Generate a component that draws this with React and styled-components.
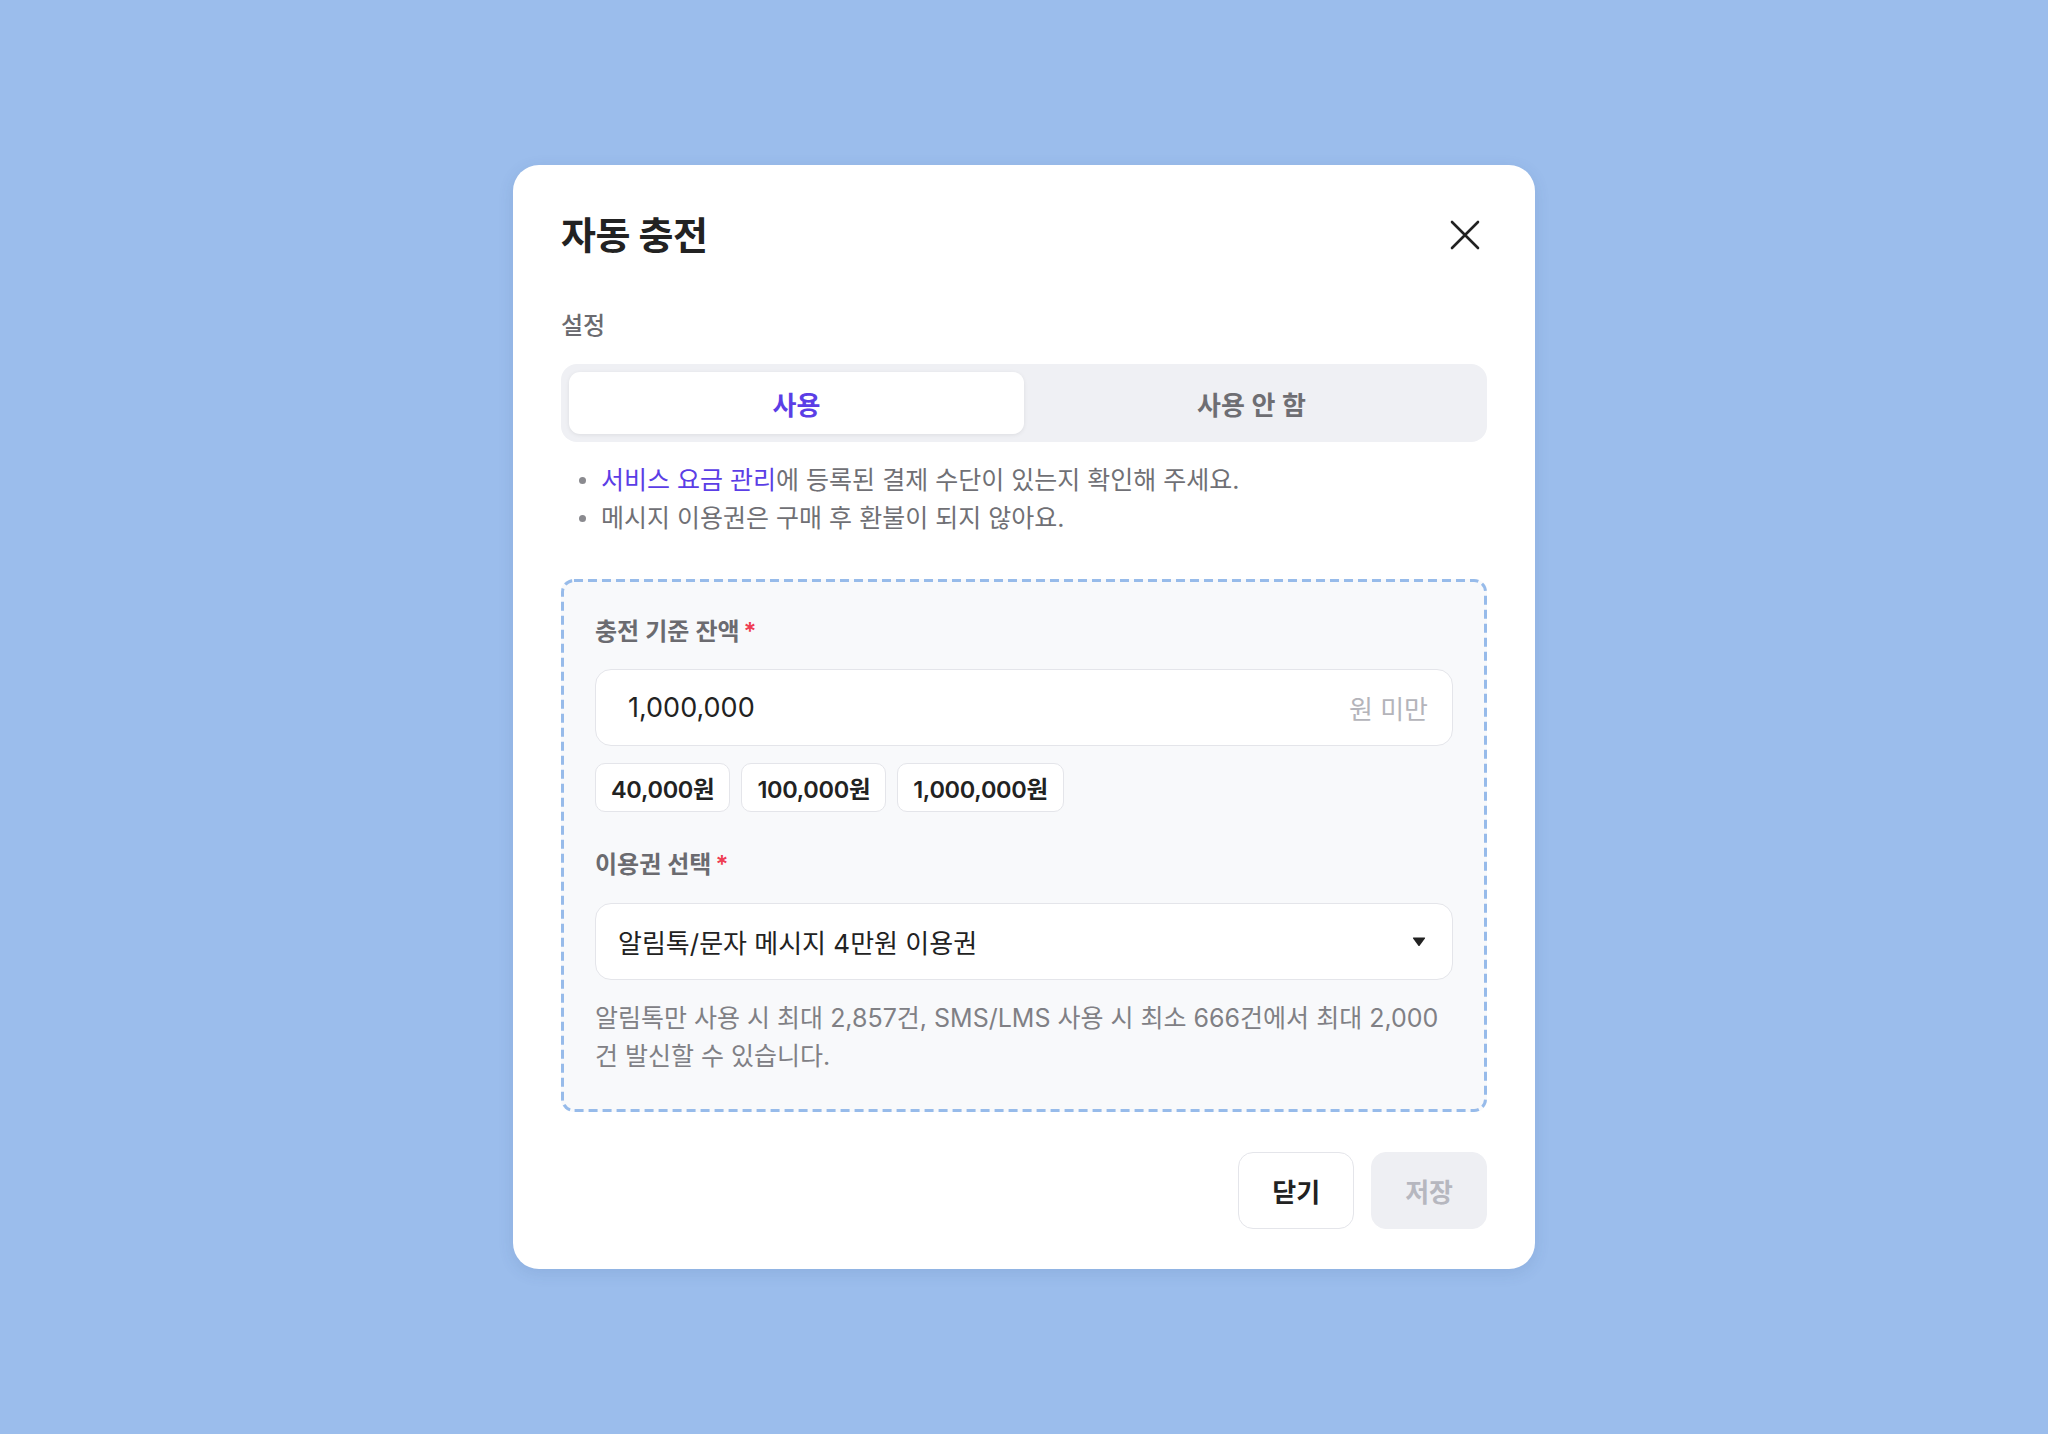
import React, { useState } from "react";
import styled, { createGlobalStyle } from "styled-components";

const GlobalStyle = createGlobalStyle`
  html, body {
    margin: 0;
    padding: 0;
    background: #9bbdec;
    font-family: Inter, "Noto Sans CJK KR", sans-serif;
  }
  * { box-sizing: border-box; }
`;

const amounts = ["40,000원", "100,000원", "1,000,000원"];

// dashed outline with longer dashes than the browser's own dashed border
const dashSvg = encodeURIComponent(
  "<svg xmlns='http://www.w3.org/2000/svg' width='100%' height='100%'>" +
    "<rect width='100%' height='100%' rx='13' ry='13' fill='none' stroke='#97bbea' stroke-width='6' stroke-dasharray='9 5'/>" +
    "</svg>"
);

const App = () => {
  const [use, setUse] = useState(true);
  const [amount, setAmount] = useState("1,000,000");

  return (
    <Page>
      <GlobalStyle />
      <Modal>
        <Header>
          <Title>자동 충전</Title>
          <CloseButton aria-label="닫기">
            <svg width="30" height="30" viewBox="0 0 30 30">
              <path d="M2 2 L28 28 M28 2 L2 28" stroke="#222" strokeWidth="2.6" strokeLinecap="round" />
            </svg>
          </CloseButton>
        </Header>

        <SectionLabel>설정</SectionLabel>
        <Segment>
          <SegmentItem active={use} onClick={() => setUse(true)}>사용</SegmentItem>
          <SegmentItem active={!use} onClick={() => setUse(false)}>사용 안 함</SegmentItem>
        </Segment>

        <Notes>
          <li>
            <NoteLink>서비스 요금 관리</NoteLink>에 등록된 결제 수단이 있는지 확인해 주세요.
          </li>
          <li>메시지 이용권은 구매 후 환불이 되지 않아요.</li>
        </Notes>

        <DashedBox>
          <FieldLabel>
            충전 기준 잔액<Required>*</Required>
          </FieldLabel>
          <InputWrap>
            <AmountInput value={amount} onChange={(e) => setAmount(e.target.value)} />
            <Suffix>원 미만</Suffix>
          </InputWrap>
          <Chips>
            {amounts.map((a) => (
              <Chip key={a} onClick={() => setAmount(a.replace("원", ""))}>{a}</Chip>
            ))}
          </Chips>

          <FieldLabel second>
            이용권 선택<Required>*</Required>
          </FieldLabel>
          <SelectBox>
            <span>알림톡/문자 메시지 4만원 이용권</span>
            <svg width="14" height="11" viewBox="0 0 14 11">
              <path d="M1.5 1.5 H12.5 Q13.6 1.5 12.9 2.5 L7.8 9.6 Q7 10.6 6.2 9.6 L1.1 2.5 Q0.4 1.5 1.5 1.5 Z" fill="#222" />
            </svg>
          </SelectBox>
          <Help>
            알림톡만 사용 시 최대 2,857건, SMS/LMS 사용 시 최소 666건에서 최대 2,000건 발신할 수 있습니다.
          </Help>
        </DashedBox>

        <Footer>
          <Button>닫기</Button>
          <Button disabled>저장</Button>
        </Footer>
      </Modal>
    </Page>
  );
};

const Page = styled.div`
  width: 100%;
  height: 1434px;
  display: flex;
  align-items: center;
  justify-content: center;
`;

const Modal = styled.div`
  width: 1022px;
  background: #fff;
  border-radius: 26px;
  padding: 46px 48px 40px;
  display: flex;
  flex-direction: column;
  box-shadow: 0 4px 16px rgba(40, 70, 120, 0.12);
`;

const Header = styled.div`
  display: flex;
  align-items: center;
  justify-content: space-between;
  height: 48px;
`;

const Title = styled.h1`
  margin: 0;
  font-size: 38px;
  line-height: 48px;
  font-weight: 700;
  color: #222;
  letter-spacing: -0.5px;
`;

const CloseButton = styled.button`
  border: none;
  background: none;
  padding: 0;
  margin-right: 7px;
  display: flex;
  cursor: pointer;
`;

const SectionLabel = styled.div`
  margin-top: 51px;
  font-size: 24px;
  line-height: 32px;
  font-weight: 500;
  color: #6b6b70;
`;

const Segment = styled.div`
  margin-top: 22px;
  height: 78px;
  padding: 8px;
  background: #eff0f4;
  border-radius: 16px;
  display: grid;
  grid-template-columns: 1fr 1fr;
`;

const SegmentItem = styled.button`
  border: none;
  border-radius: 11px;
  font-family: inherit;
  font-size: 26px;
  font-weight: 600;
  cursor: pointer;
  background: ${(p) => (p.active ? "#fff" : "transparent")};
  color: ${(p) => (p.active ? "#5b3ee6" : "#6e6e73")};
  box-shadow: ${(p) => (p.active ? "0 1px 4px rgba(0, 0, 0, 0.08)" : "none")};
`;

const Notes = styled.ul`
  margin: 19px 0 0;
  padding: 0 0 0 40px;
  list-style: none;
  font-size: 25px;
  line-height: 38px;
  color: #707075;

  li {
    position: relative;
  }

  li::before {
    content: "";
    position: absolute;
    left: -22px;
    top: 16px;
    width: 7px;
    height: 7px;
    border-radius: 50%;
    background: #8a8a8f;
  }
`;

const NoteLink = styled.span`
  color: #5b3ee6;
`;

const DashedBox = styled.div`
  margin-top: 42px;
  border-radius: 13px;
  background-color: #f8f9fb;
  background-image: url("data:image/svg+xml,${dashSvg}");
  padding: 37px 34px 37px;
  display: flex;
  flex-direction: column;
`;

const FieldLabel = styled.div`
  margin-top: ${(p) => (p.second ? "37px" : "0")};
  font-size: 24px;
  line-height: 32px;
  font-weight: 600;
  color: #6b6b70;
`;

const Required = styled.span`
  color: #ef3e52;
  margin-left: 4px;
`;

const InputWrap = styled.div`
  margin-top: 21px;
  height: 77px;
  background: #fff;
  border: 1.5px solid #e4e5ea;
  border-radius: 16px;
  display: flex;
  align-items: center;
  padding: 0 24px 0 32px;
`;

const AmountInput = styled.input`
  flex: 1;
  border: none;
  outline: none;
  background: transparent;
  font-family: inherit;
  font-size: 27px;
  color: #222;
  padding: 0;
`;

const Suffix = styled.span`
  font-size: 26px;
  color: #b4b4ba;
`;

const Chips = styled.div`
  margin-top: 17px;
  display: flex;
  gap: 11px;
`;

const Chip = styled.button`
  height: 49px;
  padding: 0 15px;
  background: #fff;
  border: 1.5px solid #e4e5ea;
  border-radius: 10px;
  font-family: inherit;
  font-size: 23.5px;
  font-weight: 600;
  color: #222;
  letter-spacing: -0.3px;
  cursor: pointer;
`;

const SelectBox = styled.div`
  margin-top: 22px;
  height: 77px;
  background: #fff;
  border: 1.5px solid #e4e5ea;
  border-radius: 16px;
  display: flex;
  align-items: center;
  justify-content: space-between;
  padding: 0 26px 0 22px;
  font-size: 26px;
  color: #222;
  cursor: pointer;
`;

const Help = styled.p`
  margin: 19px 0 0;
  font-size: 25px;
  line-height: 38px;
  color: #808085;
`;

const Footer = styled.div`
  margin-top: 40px;
  display: flex;
  justify-content: flex-end;
  gap: 17px;
`;

const Button = styled.button`
  height: 77px;
  padding: 0 33px;
  border-radius: 15px;
  font-family: inherit;
  font-size: 26px;
  font-weight: 600;
  cursor: pointer;
  background: #fff;
  color: #222;
  border: 1.5px solid #e4e5ea;

  &:disabled {
    background: #eeeff3;
    color: #b6b7bf;
    border-color: #eeeff3;
    cursor: default;
  }
`;

export default App;
